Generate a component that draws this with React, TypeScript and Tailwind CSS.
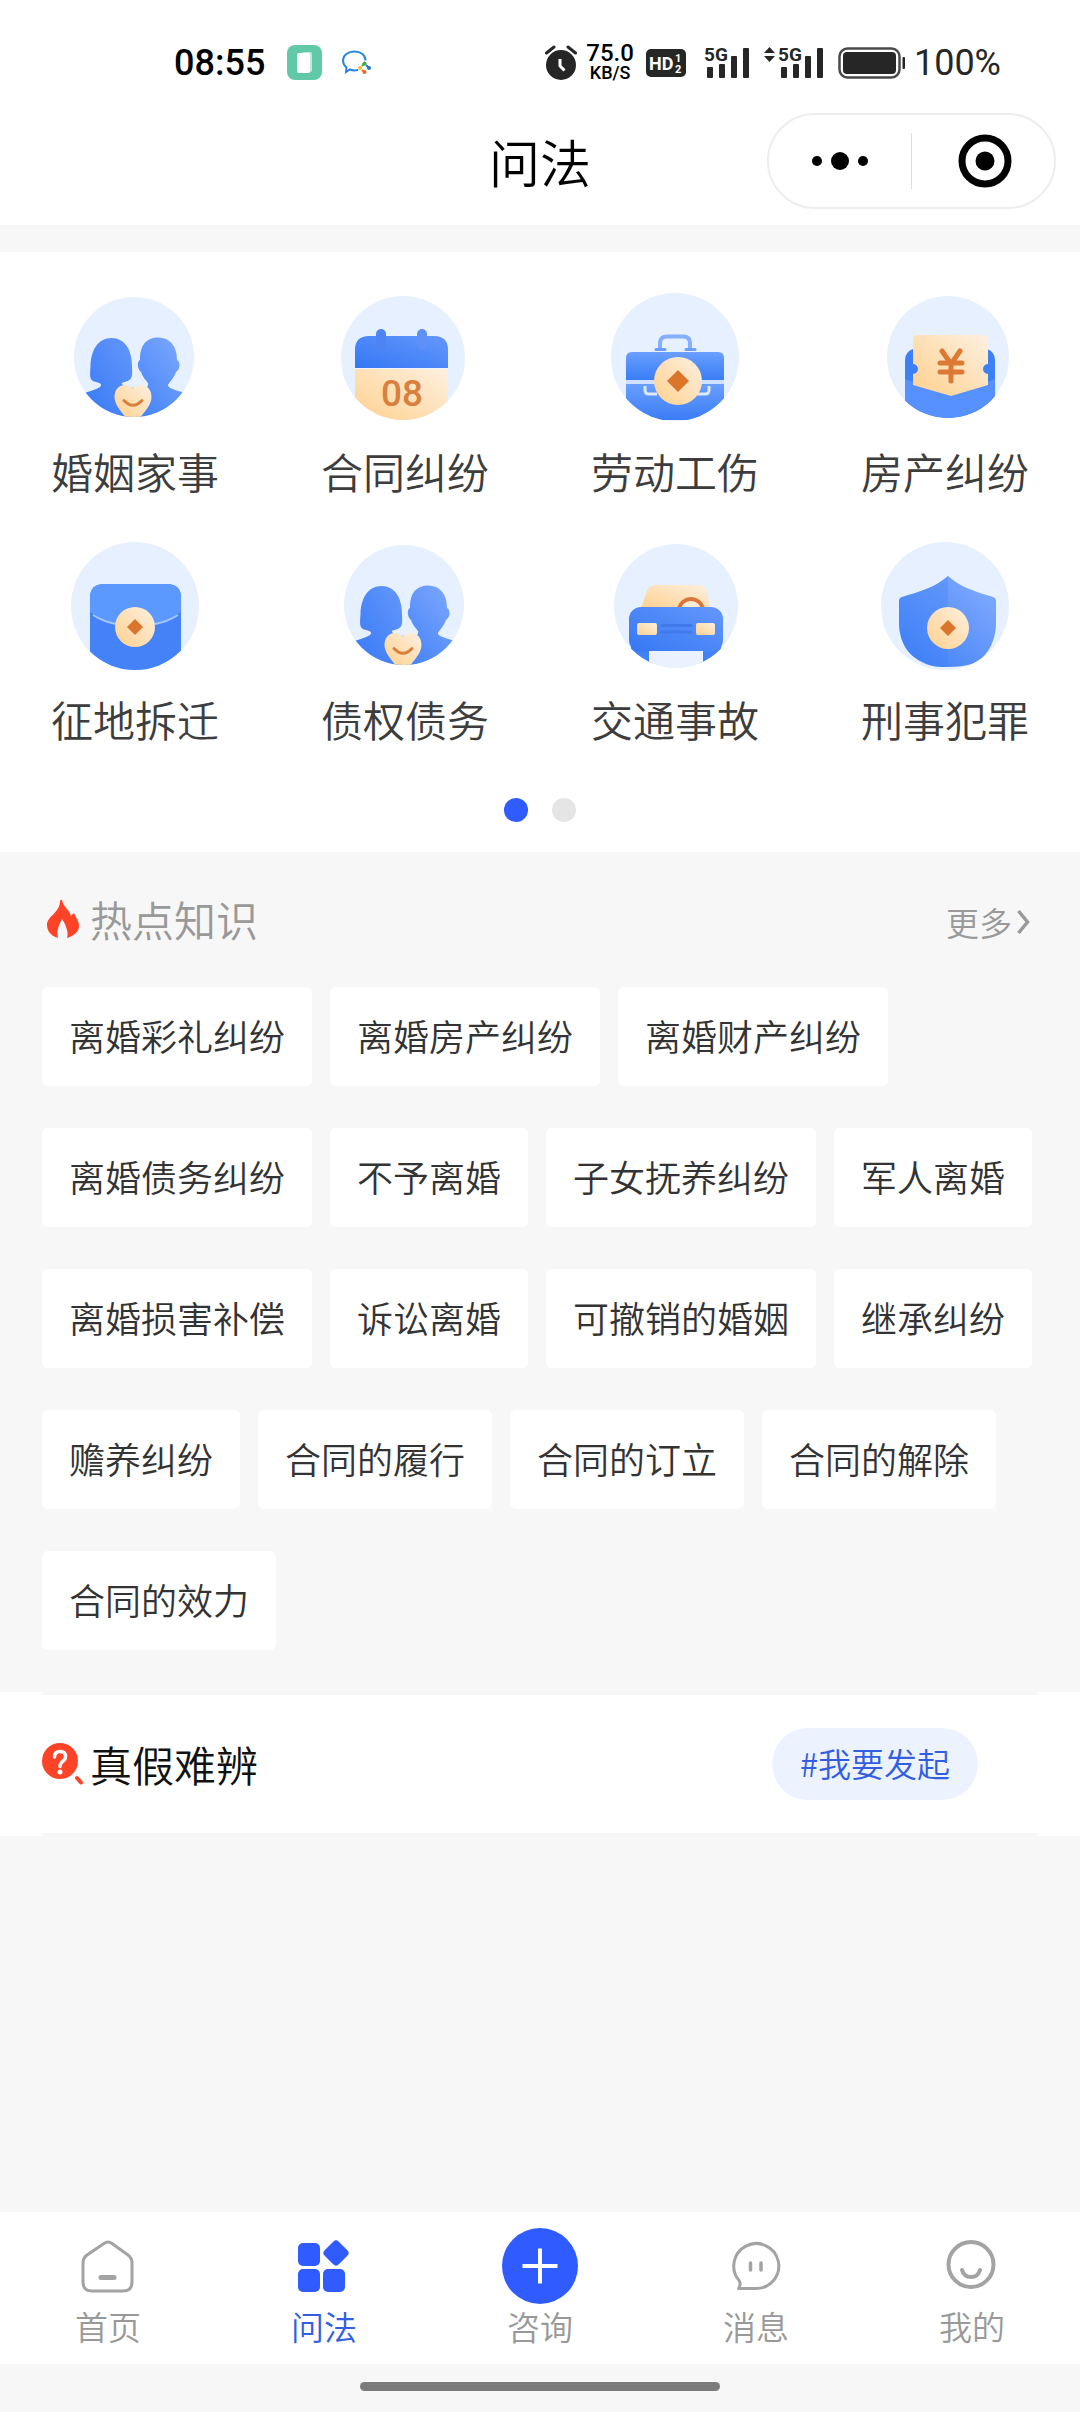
import React from "react";

interface IconBaseProps {
  cx: number;
  cy: number;
  r: number;
  children: React.ReactNode;
}

// round pale backdrop, the drawing is cut off at the edge of the circle
const IconBase = ({ cx, cy, r, children }: IconBaseProps) => {
  const id = React.useId();
  return (
    <svg viewBox="0 0 150 150" className="w-[150px] h-[150px]" aria-hidden="true">
      <clipPath id={id}>
        <circle cx={cx} cy={cy} r={r} />
      </clipPath>
      <circle cx={cx} cy={cy} r={r} fill="#e6f0ff" />
      <g clipPath={`url(#${id})`}>{children}</g>
    </svg>
  );
};

const Gradients = () => (
  <svg width="0" height="0" className="absolute" aria-hidden="true">
    <defs>
      <linearGradient id="blue" x1="0" y1="1" x2="1" y2="0">
        <stop offset="0" stopColor="#3a7df6" />
        <stop offset="1" stopColor="#85adff" />
      </linearGradient>
      <linearGradient id="blueDeep" x1="0" y1="1" x2="1" y2="0">
        <stop offset="0" stopColor="#3478f4" />
        <stop offset="1" stopColor="#6597fc" />
      </linearGradient>
      <linearGradient id="blueDown" x1="0" y1="0" x2="0" y2="1">
        <stop offset="0" stopColor="#6a9fff" />
        <stop offset="1" stopColor="#3a7df5" />
      </linearGradient>
      <linearGradient id="cream" x1="0" y1="1" x2="1" y2="0">
        <stop offset="0" stopColor="#ffd08d" />
        <stop offset="1" stopColor="#fdf0e0" />
      </linearGradient>
    </defs>
  </svg>
);

const Coin = ({ x, y, r, d }: { x: number; y: number; r: number; d: number }) => (
  <>
    <circle cx={x} cy={y} r={r} fill="url(#cream)" />
    <path
      d={`M${x} ${y - d}L${x + d} ${y}L${x} ${y + d}L${x - d} ${y}Z`}
      fill="#dc752c"
    />
  </>
);

const CoupleIcon = () => (
  <IconBase cx={74} cy={75} r={60}>
    <path
      d="M51.500 56C38 56 31 68 30.500 84C30 92 29 98 34 99.500C38 100.500 41 101 41 103C41 106 36 107 22 112L22 140L74 140L74 106C66 105 61 103 62 101C64 99.500 67 100 70 97.500C73 95 72 89 72 84C72 68 65 56 51.500 56Z"
      fill="url(#blueDeep)"
    />
    <path
      d="M98 55.500C86 55.500 79.500 64 80 78C77 79 77 87 81 90C83 96 86 98 88 101C89 104 86 107 80 108L68 140L134 140L134 114C122 109 110 108 108 104C107 102 114 97 116 90C120 88 121 80 117 78C117 64 110 55.500 98 55.500Z"
      fill="url(#blue)"
    />
    <path
      d="M73 106.500C67 100 54.500 102 54.500 115C54.500 123 62 130 66 136L80 136C84 130 91.500 123 91.500 115C91.500 102 79 100 73 106.500Z"
      fill="url(#cream)"
    />
    <path d="M64 118.500Q73 128 82 118.500" fill="none" stroke="#d9803f" strokeWidth="3" strokeLinecap="round" />
  </IconBase>
);

const CalendarIcon = () => (
  <IconBase cx={73} cy={76} r={62}>
    <path d="M25 86V68Q25 54 39 54H104Q118 54 118 68V86Z" fill="url(#blueDeep)" />
    <rect x="25" y="86" width="93" height="2" fill="#eef4ff" />
    <rect x="25" y="87" width="93" height="54" fill="url(#cream)" />
    <rect x="46" y="47" width="10" height="20" rx="5" fill="#4d83f3" />
    <rect x="87" y="47" width="10" height="20" rx="5" fill="#5e90f8" />
    <text x="72" y="124" textAnchor="middle" className="font-[Roboto] font-medium" fontSize="37" fill="#d9803f">
      08
    </text>
  </IconBase>
);

const BriefcaseIcon = () => (
  <IconBase cx={75} cy={75} r={64}>
    <path d="M60 67V61Q60 54.500 67 54.500H83Q90 54.500 90 61V67" fill="none" stroke="#84b0ff" strokeWidth="4" />
    <path d="M56 67.500H65M86 67.500H95" stroke="#6b9eff" strokeWidth="3" strokeLinecap="round" />
    <path d="M26 98V76Q26 70 32 70H118Q124 70 124 76V98Z" fill="url(#blueDown)" />
    <path d="M26 102H124V138H26Z" fill="url(#blueDown)" />
    <path d="M26 98H124V102H26Z" fill="#cfe1ff" />
    <path
      d="M45 104V108Q45 112 49 112H57M109 104V108Q109 112 105 112H97"
      fill="none"
      stroke="#dbe9ff"
      strokeWidth="3"
    />
    <Coin x={78} y={99} r={24} d={11} />
  </IconBase>
);

const CouponIcon = () => (
  <IconBase cx={78} cy={75} r={61}>
    <path d="M35 140V78Q35 70 43 67H117Q125 70 125 78V140Z" fill="#3d7ff5" />
    <path d="M35 97L81 114L125 97V140H35Z" fill="#5790ff" />
    <path
      d="M47 53H113Q118 53 118 58V82A5 5 0 0 0 118 92V103L81 114L43 103V92A5 5 0 0 0 43 82V58Q43 53 47 53Z"
      fill="url(#cream)"
    />
    <path
      d="M72 69L81 82L90 69M81 82V99M70 81H92M70 90H92"
      fill="none"
      stroke="#dc7a35"
      strokeWidth="5"
      strokeLinecap="round"
    />
  </IconBase>
);

const MailIcon = () => (
  <IconBase cx={75} cy={76} r={64}>
    <path d="M30 84V68Q30 54 44 54H107Q121 54 121 68V142H30Z" fill="#4383f7" />
    <path d="M30 82V68Q30 54 44 54H107Q121 54 121 68V82Q99 97 75 98Q52 97 30 82Z" fill="#5b98ff" />
    <path d="M33 85Q44 92 56 94M118 85Q107 92 95 94" fill="none" stroke="#a6c7ff" strokeWidth="2" />
    <Coin x={75} y={97} r={20} d={8} />
  </IconBase>
);

const CarIcon = () => (
  <IconBase cx={76} cy={76} r={62}>
    <path d="M41 78L47 61Q49 55 55 55H99Q105 55 107 61L110 78Z" fill="url(#cream)" />
    <path d="M79 78A12.500 12.500 0 0 1 103 78" fill="#fdebd5" stroke="#d9763a" strokeWidth="4" />
    <path d="M31 112H51V134H31ZM101 112H121V134H101Z" fill="#4181f8" />
    <rect x="29" y="77" width="94" height="45" rx="12" fill="url(#blueDeep)" />
    <path d="M49 121H103V140H49Z" fill="#eaf2ff" />
    <rect x="37" y="93" width="20" height="12" rx="2" fill="url(#cream)" />
    <rect x="96" y="93" width="19" height="12" rx="2" fill="url(#cream)" />
    <path d="M62 95.500H91M62 102H91" stroke="#4079ea" strokeWidth="3" strokeLinecap="round" />
  </IconBase>
);

const ShieldIcon = () => (
  <IconBase cx={75} cy={76} r={64}>
    <path
      d="M78 46C90 57 106 62 123 67Q126 68 126 71V92C126 112 117 128 102 134Q92 137 78 137C70 137 62 137 54 133C38 126 29 112 29 92V71Q29 68 32 67C49 62 66 57 78 46Z"
      fill="url(#blue)"
    />
    <path
      d="M78 46V137C70 137 62 137 54 133C38 126 29 112 29 92V71Q29 68 32 67C49 62 66 57 78 46Z"
      fill="#3f80f8"
      fillOpacity="0.3"
    />
    <Coin x={78} y={98} r={21} d={8} />
  </IconBase>
);

const categories = [
  { name: "婚姻家事", icon: <CoupleIcon /> },
  { name: "合同纠纷", icon: <CalendarIcon /> },
  { name: "劳动工伤", icon: <BriefcaseIcon /> },
  { name: "房产纠纷", icon: <CouponIcon /> },
  { name: "征地拆迁", icon: <MailIcon /> },
  { name: "债权债务", icon: <CoupleIcon /> },
  { name: "交通事故", icon: <CarIcon /> },
  { name: "刑事犯罪", icon: <ShieldIcon /> },
];

const hotTopics = [
  "离婚彩礼纠纷",
  "离婚房产纠纷",
  "离婚财产纠纷",
  "离婚债务纠纷",
  "不予离婚",
  "子女抚养纠纷",
  "军人离婚",
  "离婚损害补偿",
  "诉讼离婚",
  "可撤销的婚姻",
  "继承纠纷",
  "赡养纠纷",
  "合同的履行",
  "合同的订立",
  "合同的解除",
  "合同的效力",
];

const tabs = [
  {
    name: "首页",
    icon: (
      <g fill="none" stroke="#a3a3a3" strokeWidth="3" strokeLinecap="round" strokeLinejoin="round">
        <path d="M34 15.500Q38 12.500 42 15.500L58 27Q62 30 62 35V54Q62 63 53 63H22Q13 63 13 54V35Q13 30 17 27Z" />
        <path d="M31 49.500H44" strokeWidth="5" />
      </g>
    ),
  },
  {
    name: "问法",
    active: true,
    icon: (
      <g fill="#2f5bff">
        <rect x="12" y="15" width="22" height="23" rx="5" />
        <rect x="12" y="41" width="22" height="23" rx="5" />
        <rect x="37" y="41" width="22" height="23" rx="5" />
        <rect x="40" y="15" width="20" height="20" rx="4" transform="rotate(45 50 25)" />
      </g>
    ),
  },
  {
    name: "咨询",
    icon: (
      <>
        <circle cx="38" cy="38" r="38" fill="#2f5bff" />
        <path d="M38 20.500V55.500M20.500 38H55.500" stroke="#fff" strokeWidth="4" />
      </>
    ),
  },
  {
    name: "消息",
    icon: (
      <g fill="none" stroke="#a3a3a3" strokeWidth="3" strokeLinecap="round" strokeLinejoin="round">
        <path d="M38 60.500H20.500Q23 57 21.500 53A22.500 22.500 0 1 1 38 60.500Z" />
        <path d="M32.500 35V42M43 35V42" strokeWidth="3.500" />
      </g>
    ),
  },
  {
    name: "我的",
    icon: (
      <g fill="none" stroke="#a3a3a3" strokeWidth="4" strokeLinecap="round">
        <circle cx="37" cy="36.500" r="22.500" />
        <path d="M28 42Q30 49 37 49Q44 49 46 42" />
      </g>
    ),
  },
];

const SignalBars = () => (
  <>
    <text x="0" y="16" className="font-[Roboto] font-bold" fontSize="19">
      5G
    </text>
    <rect x="3" y="22" width="6" height="11" rx="1" />
    <rect x="15" y="19" width="6" height="14" rx="1" />
    <rect x="27" y="11" width="6" height="22" rx="1" />
    <rect x="39" y="3" width="6" height="30" rx="1" />
  </>
);

const StatusBar = () => (
  <div className="flex items-center justify-between h-[96px] pt-[30px] pl-[174px] pr-[79px] font-[Roboto] text-[#262626]">
    <div className="flex items-center">
      <span className="text-4xl font-medium text-black">08:55</span>
      <svg viewBox="0 0 36 36" className="w-9 h-9 ml-[22px]" aria-hidden="true">
        <rect width="35" height="35" rx="8" fill="#62c9a8" />
        <path d="M14 7H23Q25 7 25 9V26L22 28V9Z" fill="#bdebdc" />
        <rect x="10" y="8" width="13" height="20" rx="2" fill="#fff" />
      </svg>
      <svg viewBox="0 0 30 26" className="w-[30px] h-[26px] ml-[19px]" aria-hidden="true">
        <path
          d="M16 20Q11 21 8 19.500L4 22L4.500 17.500Q1 14.500 1 10.500C1 5 6 1.500 12.500 1.500C19 1.500 23.500 5 23.500 10.500"
          fill="none"
          stroke="#2a86dd"
          strokeWidth="2"
        />
        <circle cx="22.500" cy="13.500" r="2" fill="#3fae3b" />
        <circle cx="27" cy="18" r="2" fill="#2475cc" />
        <circle cx="22.500" cy="22" r="2" fill="#f0682c" />
        <circle cx="18" cy="18" r="2" fill="#f9bd2c" />
        <path d="M20 16L22 14" stroke="#3fae3b" strokeWidth="2" />
        <path d="M24 15L27 18" stroke="#2475cc" strokeWidth="2" />
        <path d="M20 20L22 22" stroke="#f0682c" strokeWidth="2" />
      </svg>
    </div>
    <div className="flex items-center">
      <svg viewBox="0 0 32 36" className="w-8 h-9" aria-hidden="true">
        <circle cx="16" cy="20" r="15" fill="#262626" />
        <path d="M1.500 8L9 2M23 2L30.500 8" stroke="#262626" strokeWidth="3" strokeLinecap="round" />
        <path d="M15 14V21L19.500 25.500" fill="none" stroke="#fff" strokeWidth="3" />
      </svg>
      <div className="flex flex-col items-center ml-[9px] font-medium text-black">
        <span className="text-2xl leading-5">75.0</span>
        <span className="text-lg leading-5">KB/S</span>
      </div>
      <svg viewBox="0 0 40 28" className="w-10 h-7 ml-3" fill="#fff" aria-hidden="true">
        <rect width="40" height="28" rx="5" fill="#262626" />
        <text x="3" y="21" className="font-[Roboto] font-bold" fontSize="18">
          HD
        </text>
        <text x="29" y="13" className="font-[Roboto] font-bold" fontSize="11">
          1
        </text>
        <text x="29" y="24" className="font-[Roboto] font-bold" fontSize="11">
          2
        </text>
      </svg>
      <svg viewBox="0 -6 46 48" className="w-[46px] h-12 ml-[18px]" fill="#262626" aria-hidden="true">
        <SignalBars />
      </svg>
      <svg viewBox="-14 -6 60 48" className="w-[60px] h-12 ml-[14px]" fill="#262626" aria-hidden="true">
        <path d="M-14 8L-8.500 2L-3 8ZM-14 11L-8.500 17L-3 11Z" />
        <SignalBars />
      </svg>
      <svg viewBox="0 0 68 32" className="w-[68px] h-8 ml-[14px]" aria-hidden="true">
        <rect x="1.500" y="1.500" width="60" height="29" rx="8" fill="none" stroke="#4a4a4a" strokeWidth="2.500" />
        <rect x="5" y="5" width="53" height="22" rx="4" fill="#262626" />
        <rect x="64.500" y="10" width="2.500" height="12" rx="1" fill="#262626" />
      </svg>
      <span className="ml-2 text-4xl font-normal">100%</span>
    </div>
  </div>
);

const App = () => {
  return (
    <div className="flex flex-col min-h-screen bg-[#f7f7f7] font-['Noto_Sans_CJK_SC',sans-serif] font-[350]">
      <Gradients />
      <header className="bg-white">
        <StatusBar />
        <div className="flex items-center h-[129px] pr-6">
          <div className="flex-1" />
          <h1 className="pl-6 text-[51px] leading-[60px] text-black">问法</h1>
          <div className="flex justify-end flex-1">
            <div className="flex items-center w-[289px] h-24 border-2 border-[#ededed] rounded-full">
              <button className="flex items-center justify-center w-1/2" aria-label="更多操作">
                <svg viewBox="0 0 58 20" className="w-[58px] h-5">
                  <circle cx="6" cy="10" r="5" />
                  <circle cx="29" cy="10" r="9" />
                  <circle cx="52" cy="10" r="5" />
                </svg>
              </button>
              <div className="w-px h-14 bg-[#dcdcdc]" />
              <button className="flex items-center justify-center w-1/2 pl-1" aria-label="关闭">
                <svg viewBox="0 0 54 54" className="w-[54px] h-[54px]">
                  <circle cx="27" cy="27" r="23" fill="none" stroke="#000" strokeWidth="7" />
                  <circle cx="27" cy="27" r="9.500" />
                </svg>
              </button>
            </div>
          </div>
        </div>
      </header>

      <section className="mt-[27px] py-[30px] bg-white">
        <div className="grid grid-cols-4 gap-y-9">
          {categories.map((item) => (
            <a href="#" key={item.name} className="flex flex-col items-center gap-4">
              {item.icon}
              <span className="text-[42px] leading-[46px] text-[#3d3d3d]">{item.name}</span>
            </a>
          ))}
        </div>
        <div className="flex justify-center gap-6 mt-14">
          <span className="w-6 h-6 rounded-full bg-[#2f5bff]" />
          <span className="w-6 h-6 rounded-full bg-[#e5e5e5]" />
        </div>
      </section>

      <section className="px-[42px] pt-10 pb-[42px]">
        <div className="flex items-end justify-between pr-[6px] mb-[41px]">
          <div className="flex items-center">
            <svg viewBox="0 0 40 40" className="w-10 h-10" aria-hidden="true">
              <path
                d="M20 1C21 8 28 11 29 17C30 15.500 31 15 32 14C34 19 37 22 37 27C37 33 31 37 25 39C27 34 24 26 20 20C17 26 14 33 16 39C9 37 5 32 5 26C5 17 18 14 18 2Q19 0 20 1Z"
                fill="#ff4326"
              />
            </svg>
            <h2 className="ml-2 text-[42px] leading-[54px] text-[#999]">热点知识</h2>
          </div>
          <a href="#" className="flex items-center text-[33px] leading-[48px] text-[#999]">
            更多
            <svg viewBox="0 0 20 32" className="w-5 h-8" aria-hidden="true">
              <path d="M6.500 5L15.500 16L6.500 27" fill="none" stroke="#999" strokeWidth="3.500" />
            </svg>
          </a>
        </div>
        <div className="flex flex-wrap gap-x-[18px] gap-y-[42px]">
          {hotTopics.map((topic) => (
            <button
              key={topic}
              className="h-[99px] px-[27px] pb-1 bg-white rounded-md text-4xl text-[#333]"
            >
              {topic}
            </button>
          ))}
        </div>
      </section>

      <section className="px-[42px] bg-white">
        <div className="flex items-center justify-between h-36 pr-[60px] border-y-3 border-[#f7f7f7]">
          <div className="flex items-center">
            <svg viewBox="0 0 42 42" className="w-[42px] h-[42px]" aria-hidden="true">
              <circle cx="18" cy="18" r="18" fill="#ff4326" />
              <path d="M35 35L39 39.500" stroke="#ff4326" strokeWidth="4" strokeLinecap="round" />
              <path
                d="M12.500 14Q12.500 8.500 18 8.500Q23.500 8.500 23.500 13.500Q23.500 16.500 20.500 18.500Q18 20.500 18 23.500"
                fill="none"
                stroke="#fff"
                strokeWidth="3.500"
                strokeLinecap="round"
              />
              <circle cx="18" cy="29" r="2.500" fill="#fff" />
            </svg>
            <h2 className="ml-[6px] text-[42px] leading-[54px] text-[#111]">真假难辨</h2>
          </div>
          <button className="h-[72px] px-7 rounded-full bg-[#ecf2fe] text-[33px] text-[#345ee0]">
            #我要发起
          </button>
        </div>
      </section>

      <nav className="grid grid-cols-5 mt-auto pt-4 pb-[15px] bg-white">
        {tabs.map((tab) => (
          <a
            href="#"
            key={tab.name}
            className={`flex flex-col items-center text-[33px] leading-[45px] ${
              tab.active ? "text-[#345ee0]" : "text-[#999]"
            }`}
          >
            <svg viewBox="0 0 76 76" className="w-[76px] h-[76px]" aria-hidden="true">
              {tab.icon}
            </svg>
            {tab.name}
          </a>
        ))}
      </nav>
      <div className="flex justify-center h-12 pt-[18px]">
        <div className="w-1/3 h-[9px] rounded-full bg-[#7b7b7b]" />
      </div>
    </div>
  );
};

export default App;
